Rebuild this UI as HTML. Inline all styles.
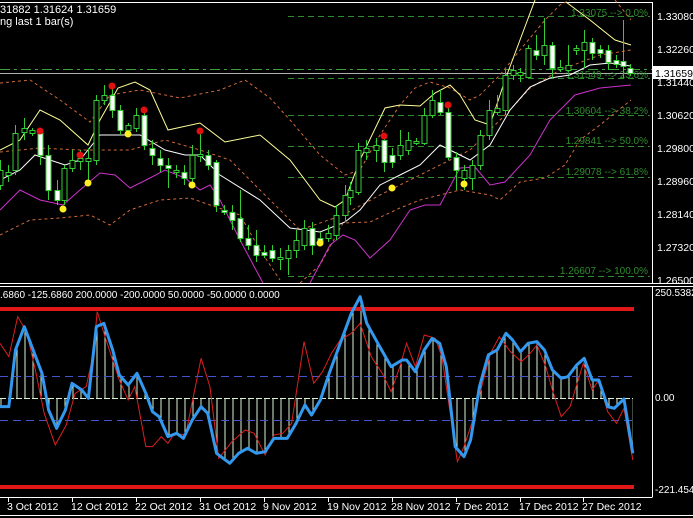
<!DOCTYPE html>
<html><head><meta charset="utf-8"><style>
html,body{margin:0;padding:0;background:#000;}
svg{display:block;}
text{font-family:"Liberation Sans",sans-serif;}
</style></head><body>
<svg width="693" height="518" viewBox="0 0 693 518" xmlns="http://www.w3.org/2000/svg">
<rect width="693" height="518" fill="#000"/>
<g stroke="#fff" stroke-width="1" fill="none">
<line x1="0" y1="2.5" x2="652.5" y2="2.5"/>
<line x1="652.5" y1="2" x2="652.5" y2="283"/>
<line x1="0" y1="283.5" x2="693" y2="283.5"/>
<line x1="0" y1="286.5" x2="693" y2="286.5"/>
<line x1="652.5" y1="286" x2="652.5" y2="497"/>
<line x1="0" y1="497.5" x2="652.5" y2="497.5"/>
<line x1="0" y1="515.5" x2="693" y2="515.5"/>
</g>
<g stroke="#2e8b2e" stroke-width="1" stroke-dasharray="6,4">
<line x1="288" y1="16.5" x2="650" y2="16.5"/>
<line x1="288" y1="78.5" x2="650" y2="78.5"/>
<line x1="288" y1="115.5" x2="650" y2="115.5"/>
<line x1="288" y1="146.5" x2="650" y2="146.5"/>
<line x1="288" y1="177.5" x2="650" y2="177.5"/>
<line x1="288" y1="276.5" x2="650" y2="276.5"/>
</g>
<line x1="0" y1="69.5" x2="652" y2="69.5" stroke="#3aa03a" stroke-dasharray="10,4,3,4"/>
<line x1="0" y1="73.5" x2="652" y2="73.5" stroke="#b0b0b0"/>
<g fill="#2e8b2e" font-size="10" text-anchor="end">
<text x="648" y="16">1.33075 --&gt; 0.0%</text>
<text x="648" y="78">1.31549 --&gt; 23.6%</text>
<text x="648" y="114">1.30604 --&gt; 38.2%</text>
<text x="648" y="144">1.29841 --&gt; 50.0%</text>
<text x="648" y="175">1.29078 --&gt; 61.8%</text>
<text x="648" y="274">1.26607 --&gt; 100.0%</text>
</g>
<g fill="none" stroke-width="1">
<polyline stroke="#d06a3a" stroke-dasharray="3,3" points="0,83 30,80 60,100 90,122 110,95 140,90 180,98 220,90 245,80 270,98 290,120 320,155 345,175 360,170 380,135 400,105 415,88 430,82 450,88 470,100 480,95 500,75 520,50 545,20 560,5 570,0"/>
<polyline stroke="#d06a3a" stroke-dasharray="3,3" points="615,0 631,20"/>
<polyline stroke="#d06a3a" stroke-dasharray="3,3" points="0,235 30,220 60,218 90,215 110,225 130,210 160,200 190,198 210,205 240,215 260,250 280,280"/>
<polyline stroke="#d06a3a" stroke-dasharray="3,3" points="300,283 320,265 343,223 370,222 400,208 420,200 440,195 460,190 490,195 500,200 520,182 545,178 565,165 580,140 600,125 631,100"/>
<polyline stroke="#d06a3a" stroke-dasharray="3,3" points="0,152 40,148 80,150 130,150 165,140 200,150 230,160 250,180 270,200 300,230 343,215 380,195 420,175 450,160 470,150 490,130 510,110 530,88 560,70 600,55 631,50"/>
<polyline stroke="#ffff99" points="0,150 20,140 40,110 60,120 88,145 100,120 118,88 135,82 150,90 168,130 200,123 225,142 260,135 290,160 320,200 335,207 345,200 360,160 385,108 400,105 420,106 435,93 450,85 460,95 475,120 490,125 505,80 520,40 535,0"/>
<polyline stroke="#ffff99" points="566,2 590,20 615,40 631,45"/>
<polyline stroke="#ffffff" points="0,180 20,170 35,155 50,160 65,165 80,160 100,135 120,135 140,135 165,150 185,155 200,155 220,175 260,200 290,228 320,232 345,222 360,210 380,185 400,175 420,165 440,145 460,155 470,160 490,145 510,110 530,87 550,78 570,75 590,65 610,63 631,66"/>
<polyline stroke="#cc33cc" points="0,210 20,190 40,200 63,205 80,190 100,173 115,175 130,188 150,178 165,170 185,178 200,190 210,185 220,200 240,240 263,283"/>
<polyline stroke="#cc33cc" points="310,283 330,245 343,235 355,240 370,258 390,240 410,210 425,205 440,205 460,168 475,167 490,185 505,182 530,155 550,120 575,95 600,88 631,85"/>
</g>
<g stroke="#33cc33" stroke-width="1">
<line x1="0.5" y1="160" x2="0.5" y2="190"/><line x1="8.5" y1="165" x2="8.5" y2="182"/><line x1="15.5" y1="125" x2="15.5" y2="175"/><line x1="24.5" y1="118" x2="24.5" y2="140"/><line x1="32.5" y1="128" x2="32.5" y2="136"/><line x1="40.5" y1="128" x2="40.5" y2="165"/><line x1="48.5" y1="145" x2="48.5" y2="200"/><line x1="57.5" y1="180" x2="57.5" y2="205"/><line x1="64.5" y1="165" x2="64.5" y2="205"/><line x1="72.5" y1="150" x2="72.5" y2="172"/><line x1="80.5" y1="150" x2="80.5" y2="170"/><line x1="88.5" y1="148" x2="88.5" y2="180"/><line x1="96.5" y1="95" x2="96.5" y2="165"/><line x1="104.5" y1="85" x2="104.5" y2="105"/><line x1="112.5" y1="85" x2="112.5" y2="118"/><line x1="120.5" y1="105" x2="120.5" y2="135"/><line x1="128.5" y1="123" x2="128.5" y2="135"/><line x1="136.5" y1="108" x2="136.5" y2="132"/><line x1="144.5" y1="108" x2="144.5" y2="150"/><line x1="152.5" y1="140" x2="152.5" y2="165"/><line x1="160.5" y1="150" x2="160.5" y2="172"/><line x1="168.5" y1="158" x2="168.5" y2="188"/><line x1="176.5" y1="165" x2="176.5" y2="178"/><line x1="184.5" y1="165" x2="184.5" y2="185"/><line x1="192.5" y1="145" x2="192.5" y2="185"/><line x1="200.5" y1="130" x2="200.5" y2="162"/><line x1="208.5" y1="150" x2="208.5" y2="170"/><line x1="216.5" y1="160" x2="216.5" y2="212"/><line x1="224.5" y1="205" x2="224.5" y2="215"/><line x1="232.5" y1="205" x2="232.5" y2="230"/><line x1="240.5" y1="190" x2="240.5" y2="242"/><line x1="248.5" y1="225" x2="248.5" y2="250"/><line x1="256.5" y1="230" x2="256.5" y2="262"/><line x1="264.5" y1="245" x2="264.5" y2="258"/><line x1="272.5" y1="245" x2="272.5" y2="262"/><line x1="280.5" y1="248" x2="280.5" y2="270"/><line x1="288.5" y1="245" x2="288.5" y2="275"/><line x1="296.5" y1="230" x2="296.5" y2="258"/><line x1="304.5" y1="220" x2="304.5" y2="250"/><line x1="312.5" y1="222" x2="312.5" y2="255"/><line x1="320.5" y1="232" x2="320.5" y2="245"/><line x1="328.5" y1="225" x2="328.5" y2="242"/><line x1="336.5" y1="205" x2="336.5" y2="240"/><line x1="345.5" y1="185" x2="345.5" y2="222"/><line x1="350.5" y1="182" x2="350.5" y2="205"/><line x1="358.5" y1="143" x2="358.5" y2="195"/><line x1="366.5" y1="140" x2="366.5" y2="160"/><line x1="376.5" y1="138" x2="376.5" y2="162"/><line x1="384.5" y1="135" x2="384.5" y2="172"/><line x1="392.5" y1="148" x2="392.5" y2="168"/><line x1="400.5" y1="130" x2="400.5" y2="160"/><line x1="408.5" y1="132" x2="408.5" y2="155"/><line x1="416.5" y1="138" x2="416.5" y2="145"/><line x1="424.5" y1="108" x2="424.5" y2="145"/><line x1="432.5" y1="90" x2="432.5" y2="118"/><line x1="440.5" y1="90" x2="440.5" y2="115"/><line x1="448.5" y1="105" x2="448.5" y2="160"/><line x1="456.5" y1="152" x2="456.5" y2="190"/><line x1="464.5" y1="165" x2="464.5" y2="190"/><line x1="472.5" y1="160" x2="472.5" y2="190"/><line x1="480.5" y1="130" x2="480.5" y2="170"/><line x1="489.5" y1="100" x2="489.5" y2="140"/><line x1="497.5" y1="95" x2="497.5" y2="115"/><line x1="505.5" y1="70" x2="505.5" y2="115"/><line x1="513.5" y1="65" x2="513.5" y2="80"/><line x1="520.5" y1="68" x2="520.5" y2="82"/><line x1="528.5" y1="45" x2="528.5" y2="78"/><line x1="536.5" y1="35" x2="536.5" y2="60"/><line x1="544.5" y1="18" x2="544.5" y2="65"/><line x1="552.5" y1="42" x2="552.5" y2="78"/><line x1="560.5" y1="60" x2="560.5" y2="72"/><line x1="568.5" y1="45" x2="568.5" y2="72"/><line x1="576.5" y1="45" x2="576.5" y2="55"/><line x1="584.5" y1="30" x2="584.5" y2="68"/><line x1="592.5" y1="38" x2="592.5" y2="60"/><line x1="600.5" y1="45" x2="600.5" y2="58"/><line x1="608.5" y1="45" x2="608.5" y2="70"/><line x1="616.5" y1="55" x2="616.5" y2="68"/><line x1="623.5" y1="20" x2="623.5" y2="78"/><line x1="630.5" y1="64" x2="630.5" y2="76"/>
</g>
<g stroke="#33cc33" stroke-width="1" fill="#000">
<rect x="-2" y="170.5" width="5" height="15"/><rect x="6" y="172.5" width="5" height="3"/><rect x="13" y="133.5" width="5" height="37"/><rect x="22" y="128.5" width="5" height="4"/><rect x="30" y="130.5" width="5" height="3"/><rect x="62" y="168.5" width="5" height="32"/><rect x="70" y="160.5" width="5" height="8"/><rect x="78" y="158.5" width="5" height="3"/><rect x="86" y="158.5" width="5" height="3"/><rect x="94" y="100.5" width="5" height="60"/><rect x="102" y="95.5" width="5" height="5"/><rect x="126" y="125.5" width="5" height="5"/><rect x="134" y="115.5" width="5" height="13"/><rect x="174" y="170.5" width="5" height="2"/><rect x="190" y="155.5" width="5" height="23"/><rect x="198" y="154.5" width="5" height="2"/><rect x="278" y="257.5" width="5" height="2"/><rect x="286" y="250.5" width="5" height="8"/><rect x="294" y="240.5" width="5" height="10"/><rect x="302" y="228.5" width="5" height="17"/><rect x="326" y="233.5" width="5" height="5"/><rect x="334" y="215.5" width="5" height="20"/><rect x="343" y="195.5" width="5" height="20"/><rect x="348" y="190.5" width="5" height="7"/><rect x="356" y="150.5" width="5" height="42"/><rect x="364" y="148.5" width="5" height="4"/><rect x="374" y="145.5" width="5" height="5"/><rect x="398" y="145.5" width="5" height="10"/><rect x="406" y="140.5" width="5" height="10"/><rect x="414" y="141.5" width="5" height="2"/><rect x="422" y="115.5" width="5" height="28"/><rect x="430" y="100.5" width="5" height="15"/><rect x="462" y="170.5" width="5" height="8"/><rect x="470" y="165.5" width="5" height="13"/><rect x="478" y="135.5" width="5" height="30"/><rect x="487" y="110.5" width="5" height="25"/><rect x="495" y="108.5" width="5" height="4"/><rect x="503" y="75.5" width="5" height="35"/><rect x="511" y="70.5" width="5" height="5"/><rect x="518" y="72.5" width="5" height="3"/><rect x="526" y="48.5" width="5" height="29"/><rect x="542" y="45.5" width="5" height="10"/><rect x="558" y="67.5" width="5" height="2"/><rect x="566" y="65.5" width="5" height="5"/><rect x="574" y="48.5" width="5" height="2"/><rect x="582" y="42.5" width="5" height="8"/>
</g>
<g stroke="#33cc33" stroke-width="1" fill="#fff">
<rect x="38" y="133.5" width="5" height="22"/><rect x="46" y="155.5" width="5" height="35"/><rect x="55" y="190.5" width="5" height="10"/><rect x="110" y="95.5" width="5" height="15"/><rect x="118" y="110.5" width="5" height="20"/><rect x="142" y="115.5" width="5" height="30"/><rect x="150" y="148.5" width="5" height="7"/><rect x="158" y="158.5" width="5" height="7"/><rect x="166" y="165.5" width="5" height="3"/><rect x="182" y="172.5" width="5" height="6"/><rect x="206" y="155.5" width="5" height="10"/><rect x="214" y="162.5" width="5" height="43"/><rect x="222" y="210.5" width="5" height="2"/><rect x="230" y="212.5" width="5" height="8"/><rect x="238" y="218.5" width="5" height="20"/><rect x="246" y="238.5" width="5" height="7"/><rect x="254" y="245.5" width="5" height="10"/><rect x="262" y="252.5" width="5" height="3"/><rect x="270" y="250.5" width="5" height="8"/><rect x="310" y="228.5" width="5" height="17"/><rect x="318" y="238.5" width="5" height="4"/><rect x="382" y="140.5" width="5" height="22"/><rect x="390" y="155.5" width="5" height="7"/><rect x="438" y="102.5" width="5" height="10"/><rect x="446" y="112.5" width="5" height="45"/><rect x="454" y="157.5" width="5" height="13"/><rect x="534" y="50.5" width="5" height="5"/><rect x="550" y="45.5" width="5" height="23"/><rect x="590" y="42.5" width="5" height="11"/><rect x="598" y="49.5" width="5" height="4"/><rect x="606" y="50.5" width="5" height="12"/><rect x="614" y="60.5" width="5" height="4"/><rect x="621" y="61.5" width="5" height="5"/><rect x="628" y="68.5" width="5" height="5"/>
</g>
<g fill="#e01010"><circle cx="40" cy="131" r="3.5"/><circle cx="80" cy="155" r="3.5"/><circle cx="112" cy="86" r="3.5"/><circle cx="144" cy="110" r="3.5"/><circle cx="200" cy="131" r="3.5"/><circle cx="384" cy="136" r="3.5"/><circle cx="448" cy="105" r="3.5"/></g>
<g fill="#ffee22"><circle cx="63" cy="209" r="3.5"/><circle cx="88" cy="183" r="3.5"/><circle cx="128" cy="134" r="3.5"/><circle cx="192" cy="185" r="3.5"/><circle cx="320" cy="243" r="3.5"/><circle cx="392" cy="188" r="3.5"/><circle cx="464" cy="184" r="3.5"/></g>
<g fill="#fff" font-size="11"><text x="0" y="13">31882 1.31624 1.31659</text><text x="0" y="25">ng last 1 bar(s)</text></g>
<g fill="#fff" font-size="10.5">
<text x="657" y="20">1.33080</text><text x="657" y="53">1.32260</text><text x="657" y="86">1.31440</text><text x="657" y="119">1.30620</text><text x="657" y="152">1.29800</text><text x="657" y="185">1.28960</text><text x="657" y="218">1.28140</text><text x="657" y="251">1.27320</text><text x="657" y="284">1.26500</text>
</g>
<rect x="653" y="66" width="40" height="13" fill="#fff"/>
<text x="655" y="77" font-size="10.5" fill="#000">1.31659</text>
<defs>
<clipPath id="hc"><polygon transform="translate(0,280) scale(0.4419,0.3333)" points="0,355 0,380 20,380 35,210 55,140 75,210 95,280 110,390 128,445 148,390 163,310 185,330 200,355 218,140 235,130 255,210 270,285 290,315 310,280 330,340 345,395 360,410 380,470 400,460 415,475 435,420 455,380 470,400 490,520 520,550 540,520 560,505 580,520 600,515 620,475 650,475 670,430 690,375 705,405 725,360 745,280 770,190 795,100 815,50 830,130 855,190 885,260 910,240 920,240 940,275 960,210 978,175 995,190 1010,260 1030,500 1050,530 1065,480 1085,320 1105,225 1125,210 1145,160 1160,180 1178,215 1195,190 1215,185 1232,210 1250,270 1270,295 1285,290 1305,255 1322,235 1340,300 1355,300 1375,380 1390,385 1412,357 1432,520 1432,355"/></clipPath>
<pattern id="vl" x="0.5" y="0" width="8" height="10" patternUnits="userSpaceOnUse"><line x1="0.5" y1="0" x2="0.5" y2="10" stroke="#d8f0d0" stroke-width="1"/></pattern>
</defs>
<rect x="0" y="290" width="633" height="200" fill="url(#vl)" clip-path="url(#hc)"/>
<line x1="0" y1="398.5" x2="633" y2="398.5" stroke="#d8f0d0" stroke-dasharray="6,2"/>
<g stroke="#4455cc" stroke-dasharray="8,5"><line x1="0" y1="376.5" x2="633" y2="376.5"/><line x1="0" y1="420.5" x2="633" y2="420.5"/></g>
<g stroke="#e01818" stroke-width="4"><line x1="0" y1="309" x2="634" y2="309"/><line x1="0" y1="487" x2="634" y2="487"/></g>
<g transform="translate(0,280) scale(0.4419,0.3333)" fill="none">
<polyline vector-effect="non-scaling-stroke" stroke="#dd2020" stroke-width="1" points="0,190 20,230 40,110 60,155 80,270 100,400 125,495 150,435 170,340 195,320 210,230 220,95 240,180 270,300 290,360 305,320 330,500 345,500 365,470 380,490 395,460 420,465 455,235 475,320 495,535 525,485 555,450 575,460 600,525 620,465 640,460 660,430 688,185 710,310 730,275 750,220 770,180 795,160 815,130 840,230 865,280 885,335 905,260 920,190 940,260 960,165 985,175 1000,230 1035,545 1050,500 1070,420 1090,320 1110,220 1130,170 1155,215 1180,245 1200,220 1215,195 1235,260 1250,330 1270,410 1290,380 1320,250 1340,330 1355,300 1375,395 1395,430 1412,385 1432,540"/>
<polyline vector-effect="non-scaling-stroke" stroke="#3399ee" stroke-width="3" stroke-linejoin="round" points="0,380 20,380 35,210 55,140 75,210 95,280 110,390 128,445 148,390 163,310 185,330 200,355 218,140 235,130 255,210 270,285 290,315 310,280 330,340 345,395 360,410 380,470 400,460 415,475 435,420 455,380 470,400 490,520 520,550 540,520 560,505 580,520 600,515 620,475 650,475 670,430 690,375 705,405 725,360 745,280 770,190 795,100 815,50 830,130 855,190 885,260 910,240 920,240 940,275 960,210 978,175 995,190 1010,260 1030,500 1050,530 1065,480 1085,320 1105,225 1125,210 1145,160 1160,180 1178,215 1195,190 1215,185 1232,210 1250,270 1270,295 1285,290 1305,255 1322,235 1340,300 1355,300 1375,380 1390,385 1412,357 1432,520"/>
</g>
<text x="0" y="298" font-size="10" fill="#fff">.6860 -125.6860 200.0000 -200.0000 50.0000 -50.0000 0.0000</text>
<g fill="#fff" font-size="10"><text x="655" y="296">250.5382</text><text x="655" y="401">0.00</text><text x="655" y="493">-221.4542</text></g>
<g stroke="#fff"><line x1="8.5" y1="497" x2="8.5" y2="502"/><line x1="72.5" y1="497" x2="72.5" y2="502"/><line x1="136.5" y1="497" x2="136.5" y2="502"/><line x1="200.5" y1="497" x2="200.5" y2="502"/><line x1="264.5" y1="497" x2="264.5" y2="502"/><line x1="328.5" y1="497" x2="328.5" y2="502"/><line x1="392.5" y1="497" x2="392.5" y2="502"/><line x1="456.5" y1="497" x2="456.5" y2="502"/><line x1="520.5" y1="497" x2="520.5" y2="502"/><line x1="583.5" y1="497" x2="583.5" y2="502"/></g>
<g fill="#fff" font-size="10.5"><text x="7" y="510">3 Oct 2012</text><text x="71" y="510">12 Oct 2012</text><text x="135" y="510">22 Oct 2012</text><text x="199" y="510">31 Oct 2012</text><text x="263" y="510">9 Nov 2012</text><text x="327" y="510">19 Nov 2012</text><text x="391" y="510">28 Nov 2012</text><text x="455" y="510">7 Dec 2012</text><text x="519" y="510">17 Dec 2012</text><text x="582" y="510">27 Dec 2012</text></g>
</svg>
</body></html>
